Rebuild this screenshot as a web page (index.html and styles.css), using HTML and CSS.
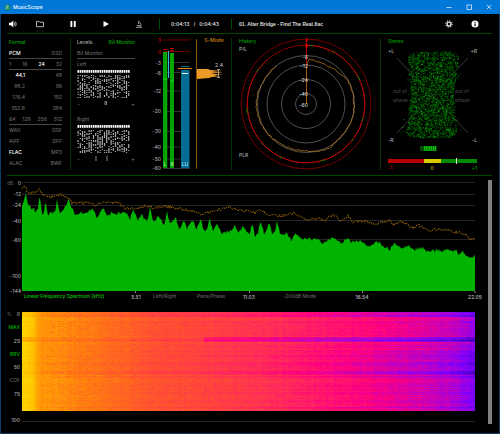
FILE: index.html
```
<!DOCTYPE html>
<html lang="en">
<head>
    <meta charset="UTF-8">
    <meta name="viewport" content="width=device-width, initial-scale=1.0">
    <title>MusicScope</title>
    <link rel="stylesheet" href="styles.css">
</head>
<body>
    <header class="titlebar">
        <svg class="app-icon" viewBox="0 0 8 8"><circle cx="4" cy="4" r="3.500" fill="#17856f"/><path d="M2 6L4 2L4.500 6M3 2.500H5.500" fill="none" stroke="#8fe0b0" stroke-width="0.800"/></svg>
        <h1>MusicScope</h1>
        <div class="window-controls">
            <button aria-label="Minimize"><svg viewBox="0 0 6 6"><path d="M0.500 3.500H5.500"/></svg></button>
            <button aria-label="Maximize"><svg viewBox="0 0 6 6"><rect x="1" y="1" width="4.500" height="4.500"/></svg></button>
            <button aria-label="Close"><svg viewBox="0 0 6 6"><path d="M0.800 0.800L5.200 5.200M5.200 0.800L0.800 5.200"/></svg></button>
        </div>
    </header>

    <main>
        <nav class="toolbar">
            <div class="transport">
                <button class="volume" aria-label="Volume"><svg viewBox="0 0 8 8"><path d="M0 2.700H1.800L4.300 0.800V7.200L1.800 5.300H0Z" fill="#fff"/><path d="M5.300 2.500Q6.200 4 5.300 5.500M6.500 1.600Q8 4 6.500 6.400" fill="none" stroke="#ddd" stroke-width="0.800"/></svg></button>
                <button aria-label="Open"><svg viewBox="0 0 8 8"><path d="M0.500 6.700V1.300H3L3.800 2.300H7.500V6.700Z" fill="none" stroke="#ccc" stroke-width="0.900"/></svg></button>
                <button aria-label="Pause"><svg viewBox="0 0 8 8"><path d="M1.400 1H3.300V7H1.400ZM4.800 1H6.700V7H4.800Z" fill="#fff"/></svg></button>
                <button aria-label="Play"><svg viewBox="0 0 8 8"><path d="M1.500 1L7 4L1.500 7Z" fill="#fff"/></svg></button>
                <button aria-label="Analyze"><svg viewBox="0 0 8 8"><path d="M1 7.300H7M2 5.600H5M4 0.600L3.300 4M4.600 2.200Q7.300 4.500 5 7" fill="none" stroke="#aaa" stroke-width="0.900"/></svg></button>
            </div>
            <div class="time"><span>0:04:13</span><span>/</span><span>0:04:43</span></div>
            <div class="track">01. Alter Bridge - Find The Real.flac</div>
            <div class="extras">
                <button aria-label="Settings"><svg viewBox="0 0 8 8"><circle cx="4" cy="4" r="3.200" fill="none" stroke="#bbb" stroke-width="1.200" stroke-dasharray="1.300 1.200"/><circle cx="4" cy="4" r="1.900" fill="none" stroke="#ddd" stroke-width="1.400"/></svg></button>
                <button aria-label="About"><svg viewBox="0 0 8 8"><circle cx="4" cy="4" r="3.500" fill="#fff"/><path d="M4 3.500V6.300M4 1.700V2.700" stroke="#000" stroke-width="1.200"/></svg></button>
            </div>
        </nav>

        <section class="meters">
            <div class="panel format">
                <h2>Format</h2>
                <div class="row line"><span class="on">PCM</span><span>DSD</span></div>
                <div class="row line"><span>1</span><span>16</span><span class="on">24</span><span>32</span></div>
                <div class="row rate"><span class="on">44.1</span><span>48</span></div>
                <div class="row rate"><span>88.2</span><span>96</span></div>
                <div class="row rate"><span>176.4</span><span>192</span></div>
                <div class="row rate"><span>352.8</span><span>384</span></div>
                <div class="row line"><span>64</span><span>128</span><span>256</span><span>512</span></div>
                <div class="row"><span>WAV</span><span>DSF</span></div>
                <div class="row"><span>AIFF</span><span>DFF</span></div>
                <div class="row"><span class="on">FLAC</span><span>MP3</span></div>
                <div class="row"><span>ALAC</span><span>BWF</span></div>
            </div>

            <div class="panel bits">
                <div class="tabs"><button>Levels</button><button class="active">Bit Monitor</button></div>
                <div class="row line"><span>Bit Monitor</span></div>
                <div class="row"><span>Left</span></div>
                <svg class="bitmap" viewBox="0 0 57 28"><path id="bits-left-top" stroke="#fff"/><path id="bits-left" stroke="#aaa"/></svg>
                <svg class="scale" viewBox="0 0 57 11"><text x="0" y="8">-</text><path d="M27.500 3V7M29 3V7" stroke="#888"/><text x="57" y="8" text-anchor="end">+</text></svg>
                <div class="row right-label"><span>Right</span></div>
                <svg class="bitmap" viewBox="0 0 57 28"><path id="bits-right-top" stroke="#fff"/><path id="bits-right" stroke="#aaa"/></svg>
                <svg class="scale" viewBox="0 0 57 11"><text x="0" y="8">-</text><path d="M18.500 3V8M29.500 3V8" stroke="#888"/><text x="57" y="8" text-anchor="end">+</text></svg>
            </div>

            <div class="panel levels">
                <svg viewBox="140 38 91 132">
                    <path d="M163 40H190M163 51.500H190" stroke="#6b0000"/>
                    <path d="M163 62.500H190M163 72.500H190M163 91H190M163 111.500H190M163 131.500H190M163 147H190M163 159H190M163 168.500H190" stroke="#333"/>
                    <g text-anchor="end" fill="#aaa">
                        <text x="161" y="42" fill="#d00000">3</text>
                        <text x="161" y="54" fill="#d00000">0</text>
                        <text x="161" y="65">-3</text>
                        <text x="161" y="75">-6</text>
                        <text x="161" y="93">-12</text>
                        <text x="161" y="113">-20</text>
                        <text x="161" y="133">-30</text>
                        <text x="161" y="149">-40</text>
                        <text x="161" y="161">-50</text>
                        <text x="161" y="170">-60</text>
                    </g>
                    <rect x="163" y="52" width="4.300" height="116" fill="#04a404"/>
                    <rect x="170" y="53" width="4" height="115" fill="#04a404"/>
                    <path d="M163 49.500H167.300M170 48.500H174M170 50.500H174" stroke="#c00000"/>
                    <path d="M163 79H167.300M170 81H174" stroke="#1de01d"/>
                    <path d="M168.500 51V78" stroke="#35b8e8"/>
                    <rect x="181" y="70" width="8.500" height="98" fill="#036d96"/>
                    <path d="M181 66.500H189.500" stroke="#036d96"/>
                    <path d="M178 68.500H192" stroke="#e08c1c"/>
                    <path d="M182 73.500H188" stroke="#fff"/>
                    <text x="165" y="166" text-anchor="middle" fill="#b8e8b8">L</text>
                    <text x="172" y="166" text-anchor="middle" fill="#b8e8b8">R</text>
                    <text x="185" y="166" text-anchor="middle" fill="#b0dcf0">LU</text>
                    <path d="M196.500 39V169" stroke="#8a5400"/>
                    <path d="M197 69H208L210 70L223 71L211 71.500L220 72L222 72.500L211 73L216 74L223 74.500L215 75L218 75.500L213 76L221 76.500L212 77L209 78L197 79Z" fill="#eb9a28"/>
                    <path d="M217 69.500H220M218.500 69.500V77.500M217 77.500H220" stroke="#ccc" stroke-width="0.700"/>
                    <text x="219" y="67" text-anchor="middle" fill="#bbb">2.4</text>
                    <text x="214" y="42" text-anchor="middle" fill="#b87814" class="bold">S-Mode</text>
                </svg>
            </div>

            <div class="panel history">
                <svg viewBox="232 38 148 132">
                    <g fill="none" stroke="#505050">
                        <circle cx="306" cy="104" r="10.500"/>
                        <circle cx="306" cy="104" r="24.500"/>
                        <circle cx="306" cy="104" r="39"/>
                        <circle cx="306" cy="104" r="48.500"/>
                        <circle cx="306" cy="104" r="65" stroke="#780000"/>
                        <circle cx="306" cy="104" r="59" stroke="#8a0000"/>
                        <path id="peak-ring" stroke="#d80c0c" stroke-width="0.700"/>
                        <path id="peak-marks" stroke="#009000" stroke-width="0.900" stroke-dasharray="3 21 2 34 5 40"/>
                        <path id="loudness-ring" stroke="#b4781e" stroke-width="0.800"/>
                    </g>
                    <path d="M306.500 39V66" stroke="#c00000"/>
                    <path d="M306.500 66V104" stroke="#a05c00"/>
                    <g text-anchor="end" fill="#ccc">
                        <text x="308" y="42" fill="#d00000">3</text>
                        <text x="308" y="48" fill="#f00000">0</text>
                        <text x="308" y="59">-6</text>
                        <text x="308" y="68">-12</text>
                        <text x="308" y="82">-24</text>
                        <text x="308" y="96">-40</text>
                        <text x="308" y="107">-60</text>
                    </g>
                    <text x="239" y="43" fill="#00a400">History</text>
                    <text x="239" y="51" fill="#aaa">P/L</text>
                    <text x="239" y="157" fill="#aaa">PLR</text>
                </svg>
            </div>

            <div class="panel stereo">
                <svg viewBox="381 38 111 132">
                    <path d="M397 58L468 133M468 58L397 133" stroke="#383838"/>
                    <g>
                        <path id="dots-dark" stroke="#004400"/>
                        <path id="dots-mid" stroke="#006c00"/>
                        <path id="dots-light" stroke="#0aa00a"/>
                    </g>
                    <text x="388" y="43" fill="#009000" class="bold">Stereo</text>
                    <g fill="#aaa">
                        <text x="388" y="53">+L</text>
                        <text x="477" y="53" text-anchor="end">+R</text>
                        <text x="388" y="142">-R</text>
                        <text x="477" y="142" text-anchor="end">-L</text>
                    </g>
                    <g fill="#404040">
                        <text x="393" y="93">out of</text>
                        <text x="393" y="102">phase</text>
                        <text x="455" y="93">out of</text>
                        <text x="455" y="102">phase</text>
                    </g>
                    <path d="M420 148.500H437" stroke="#064c06" stroke-width="5"/>
                    <path d="M424 148.500H436" stroke="#0bbd0b" stroke-width="5" stroke-dasharray="1.500 0.700"/>
                    <rect x="388" y="159" width="36" height="4" fill="#b80000"/>
                    <rect x="424" y="159" width="17" height="4" fill="#d8cc00"/>
                    <rect x="441" y="159" width="36" height="4" fill="#008c00"/>
                    <path d="M456.500 158V164" stroke="#ddd"/>
                    <text x="388" y="170" fill="#d00000">-1</text>
                    <text x="432" y="170" text-anchor="middle" fill="#c8bc00">0</text>
                    <text x="477" y="170" text-anchor="end" fill="#00a000">+1</text>
                </svg>
            </div>
        </section>

        <section class="analysis">
            <div class="plots">
                <svg class="spectrum" viewBox="7 176 481 126">
                    <path d="M22 182.500H475M22 194.500H475M22 205.500H475M22 220.500H475M22 239.500H475" stroke="#242424"/>
                    <path id="spectrum-fill" fill="#00b400"/>
                    <path id="spectrum-max" fill="none" stroke="#946208" stroke-dasharray="2 1"/>
                    <path d="M135.500 291V293M249.500 291V293M362.500 291V293M475 291V293" stroke="#888"/>
                    <text x="7" y="185" fill="#555">dB</text>
                    <g text-anchor="end" fill="#aaa">
                        <text x="21" y="185">0</text>
                        <text x="21" y="196">-12</text>
                        <text x="21" y="207">-24</text>
                        <text x="21" y="223">-40</text>
                        <text x="21" y="242">-60</text>
                        <text x="21" y="278">-100</text>
                        <text x="21" y="293">-144</text>
                    </g>
                    <text x="24" y="298" fill="#00c400">Linear Frequency Spectrum [kHz]</text>
                    <g fill="#606060">
                        <text x="153" y="298">Left/Right</text>
                        <text x="197" y="298">Pans/Phase</text>
                        <text x="283" y="298">-200dB Mode</text>
                    </g>
                    <g text-anchor="middle" fill="#bbb">
                        <text x="136" y="299">5.51</text>
                        <text x="249" y="299">11.03</text>
                        <text x="362" y="299">16.54</text>
                        <text x="475" y="299">22.05</text>
                    </g>
                </svg>
                <div class="spectrogram">
                    <div class="y-axis">
                        <div class="zero"><span class="unit">%</span><span>0</span></div>
                        <button class="active">MAX</button>
                        <span>25</span>
                        <button class="active">BRV</button>
                        <span>50</span>
                        <button>COF</button>
                        <span>75</span>
                        <span></span>
                        <span>100</span>
                    </div>
                    <div class="heat">
                        <canvas id="heatmap" width="453" height="99"></canvas>
                    </div>
                </div>
            </div>
            <div class="scrollbar"></div>
        </section>
    </main>
    <script src="scope.js"></script>
</body>
</html>
```
FILE: styles.css
```
* {
    box-sizing: border-box;
}
body {
    margin: 0;
    min-height: 100vh;
    display: flex;
    flex-direction: column;
    background: #000;
    color: #666;
    font-family: Inter, "Liberation Sans", sans-serif;
    font-size: 5px;
    font-weight: 500;
    line-height: 8px;
}
svg {
    display: block;
    width: 100%;
    overflow: visible;
}
svg text {
    font-size: 5px;
}
button {
    margin: 0;
    padding: 0;
    border: 0;
    background: none;
    color: inherit;
    font: inherit;
    cursor: pointer;
}
h1, h2 {
    margin: 0;
    font-size: 5px;
    font-weight: 500;
}
.bold {
    font-weight: 600;
}

/* title bar */
.titlebar {
    display: flex;
    align-items: center;
    height: 14px;
    padding: 0 8px 0 4px;
    background: #0078d7;
}
.titlebar h1 {
    margin-left: 2px;
    color: #f0f8ff;
}
.app-icon {
    width: 7px;
    height: 7px;
}
.window-controls {
    display: flex;
    gap: 14px;
    margin-left: auto;
}
.window-controls svg {
    width: 6px;
    height: 6px;
    fill: none;
    stroke: #d8ecff;
    stroke-width: 0.8;
}

main {
    flex: 1;
    padding: 0 7px 4px 6px;
    border: solid #0c3c66;
    border-width: 0 1px 1px;
}

/* toolbar */
.toolbar {
    display: flex;
    align-items: center;
    height: 20px;
    border-bottom: 1px solid #004a00;
}
.toolbar svg {
    width: 8px;
    height: 8px;
}
.transport {
    display: flex;
    gap: 25px;
    width: 152px;
    padding-left: 2px;
}
.transport .volume {
    margin-right: -6px;
}
.time, .track {
    height: 12px;
    border-left: 1px solid #004a00;
    color: #ddd;
    font-weight: 600;
    line-height: 13px;
}
.time {
    display: flex;
    justify-content: space-between;
    width: 72px;
    padding: 0 12px 0 11px;
}
.track {
    padding-left: 7px;
    font-family: "Liberation Sans", sans-serif;
    font-weight: 700;
}
.extras {
    display: flex;
    gap: 18px;
    margin-left: auto;
    padding-right: 13px;
}

/* meters */
.meters {
    display: grid;
    grid-template-columns: minmax(0, 63fr) minmax(0, 70fr) minmax(0, 91fr) minmax(0, 149fr) minmax(0, 112fr);
    padding: 4px 0 5px;
    border-bottom: 1px solid #004a00;
}
.bits, .history, .stereo {
    border-left: 1px solid #003600;
}
.row {
    display: flex;
    justify-content: space-between;
    height: 11px;
    line-height: 11px;
}
.line {
    border-bottom: 1px solid #484848;
}
.on {
    color: #fff;
}
.format {
    padding: 0 8px 0 2px;
}
.format h2 {
    height: 10px;
    color: #00a400;
}
.rate span:first-child {
    width: 16px;
    text-align: right;
}
.bits {
    padding: 0 5px 0 6px;
}
.tabs {
    display: flex;
    justify-content: space-between;
    height: 10px;
    color: #aaa;
    line-height: 8px;
}
.tabs button {
    height: 8px;
}
.tabs .active {
    color: #009400;
    font-weight: 600;
}
.bitmap {
    height: 28px;
}
.scale {
    height: 11px;
    fill: #888;
}
.right-label {
    height: 16px;
    line-height: 21px;
}

/* spectrum and spectrogram */
.analysis {
    display: flex;
}
.plots {
    flex: 1;
    min-width: 0;
}
.spectrogram {
    display: grid;
    grid-template-columns: 13px 1fr;
    gap: 2px;
    padding: 8px 13px 0 0;
}
.y-axis {
    display: flex;
    flex-direction: column;
    justify-content: space-between;
    align-items: flex-end;
    height: 114px;
    color: #aaa;
}
.y-axis > * {
    height: 8px;
}
.y-axis button {
    color: #606060;
}
.y-axis .active {
    color: #00b400;
}
.zero {
    display: flex;
    justify-content: space-between;
    width: 100%;
}
.unit {
    color: #606060;
}
.heat {
    height: 112px;
    padding-top: 2px;
    border-bottom: 1px solid #242424;
}
.heat canvas {
    display: block;
    width: 100%;
    height: 99px;
}
.scrollbar {
    width: 4px;
    margin-top: 4px;
    background: #808080;
}
```
FILE: scope.js
```
var seed = 7;
function rnd() {
    seed = (seed * 16807) % 2147483647;
    return seed / 2147483647;
}

function setPath(id, d) {
    document.getElementById(id).setAttribute('d', d);
}

// linear interpolation through [x, y] points
function lerpPoints(points, x) {
    for (var i = 1; i < points.length; i++) {
        if (x <= points[i][0]) {
            var a = points[i - 1], b = points[i];
            return a[1] + (b[1] - a[1]) * (x - a[0]) / (b[0] - a[0]);
        }
    }
    return points[points.length - 1][1];
}

// bit monitor
function drawBits(id) {
    var top = '', d = '';
    for (var c = 0; c < 24; c++) {
        var x = (c * 2.2).toFixed(1);
        top += 'M' + x + ' 0.500h1.600M' + x + ' 1.500h1.600M' + x + ' 2.300h1.600';
        for (var y = 5; y < 28; y += 1) {
            if (rnd() < 0.56) d += 'M' + x + ' ' + (y + 0.5) + 'h1.200';
        }
    }
    setPath(id + '-top', top);
    setPath(id, d);
}
drawBits('bits-left');
drawBits('bits-right');

// history rings
function drawRing(id, points, jitter, from, to) {
    var d = '';
    for (var a = from; a <= to; a += 2) {
        var r = lerpPoints(points, a) + (rnd() - 0.5) * jitter;
        var t = a * Math.PI / 180;
        d += (d ? 'L' : 'M') + (306 + r * Math.sin(t)).toFixed(1) + ' ' + (104 - r * Math.cos(t)).toFixed(1);
    }
    setPath(id, d);
}
drawRing('peak-ring', [[0, 58.6], [360, 58.6]], 0.8, 0, 320);
drawRing('peak-marks', [[0, 59], [360, 59]], 1, 4, 320);
drawRing('loudness-ring', [[0, 38], [4, 45], [20, 44], [35, 44], [50, 46], [60, 48], [140, 48], [155, 50],
    [180, 47], [215, 47], [230, 48], [270, 50], [300, 48], [320, 48]], 1.4, 0, 322);

// stereo scope
var dots = { 'dots-dark': 1500, 'dots-mid': 1000, 'dots-light': 260 };
Object.keys(dots).forEach(function (id) {
    var d = '';
    for (var i = 0; i < dots[id]; i++) {
        var v = rnd() * 2 - 1;
        var half = 21 + 5 * Math.abs(v);
        if (Math.abs(v) > 0.9) half *= 1 - (Math.abs(v) - 0.9) * 3;
        var h = rnd() * 2 - 1;
        if (rnd() < 0.08) h *= 1.2;
        d += 'M' + (432 + h * half - v).toFixed(1) + ' ' + (95 + v * 43).toFixed(1) + 'h1';
    }
    setPath(id, d);
});

// frequency spectrum
var floorPts = [[22, 205], [26, 194], [28, 205], [32, 208], [36, 211], [38, 210], [39.5, 194], [42, 214], [44, 213], [45.5, 203],
    [48, 214], [52, 213], [55, 211], [57, 198], [60, 214], [65, 208], [68.5, 200], [72, 209], [76, 215], [80, 212], [87, 213],
    [91.5, 208], [97, 217], [103.5, 207], [107, 216], [113, 213], [120, 214], [125, 211], [130, 219], [133.5, 210],
    [138, 220], [141.5, 215], [147, 222], [150, 208], [153, 222], [158, 217], [163, 224], [165, 222], [167, 212],
    [170, 224], [176, 218], [179, 231], [184, 219], [187, 229], [192.5, 219], [196, 229], [201, 219], [204, 231],
    [207, 228], [209.5, 218], [213, 230], [217, 224], [222, 234], [230, 231], [235, 226], [239, 233], [243, 226],
    [247, 233], [250, 232], [252.5, 223], [255, 236], [258, 232], [260.5, 222], [264, 233], [266, 231], [269, 223],
    [272, 234], [275, 231], [277, 222], [281, 236], [287, 233], [291, 240], [295, 234], [302, 239], [316, 239],
    [322, 243], [328, 239], [336, 239], [341, 245], [347, 238], [352, 242], [364, 242], [370, 247], [378, 242],
    [390, 249], [395, 243], [402, 248], [409, 246], [414, 250], [421, 247], [430, 252], [438, 250], [446, 251],
    [455, 250], [459, 254], [463, 252], [467, 256], [474, 258], [475, 254]];
var maxPts = [[22, 190], [24.5, 186], [28, 193], [33, 193], [39, 190], [43, 195], [50, 197], [57, 195], [63, 195],
    [68, 198], [72, 203], [90, 203], [95, 206], [103, 202], [118, 203], [125, 208], [135, 209], [145, 206],
    [155, 208], [165, 206], [180, 209], [190, 210], [201, 214], [215, 211], [228, 207], [240, 210], [255, 213],
    [261, 210], [268, 215], [280, 216], [295, 213], [305, 219], [320, 219], [326, 221], [330, 215], [336, 215],
    [341, 222], [348, 215], [352, 222], [365, 221], [375, 225], [382, 222], [390, 220], [393, 225], [402, 221],
    [412, 228], [418, 225], [428, 230], [445, 229], [455, 232], [465, 234], [470, 239], [475, 240]];
var fill = 'M22 291', line = '';
for (var x = 22; x <= 475; x++) {
    fill += 'L' + x + ' ' + (lerpPoints(floorPts, x) + (rnd() - 0.5) * 4).toFixed(1);
    line += (line ? 'L' : 'M') + x + ' ' + (lerpPoints(maxPts, x) + (rnd() - 0.5) * 3).toFixed(1);
}
setPath('spectrum-fill', fill + 'V291Z');
setPath('spectrum-max', line);

// spectrogram, heat 0 is loud (yellow) and 1 is quiet (violet)
var stops = [[0, 255, 212, 0], [0.05, 255, 168, 0], [0.2, 255, 118, 20], [0.4, 255, 72, 56], [0.55, 255, 40, 92],
    [0.7, 255, 0, 128], [0.8, 214, 0, 170], [0.9, 170, 0, 215], [1, 124, 0, 255], [1.15, 74, 0, 190]];
function heatColor(t) {
    t = Math.max(0, Math.min(1.15, t));
    return [1, 2, 3].map(function (c) {
        return lerpPoints(stops.map(function (s) { return [s[0], s[c]]; }), t);
    });
}
var palette = [];
for (var p = 0; p <= 230; p++) palette.push(heatColor(p / 200));

var ramp = [[0, 0], [0.025, 0.02], [0.04, 0.1], [0.15, 0.19], [0.3, 0.36], [0.5, 0.48], [0.68, 0.61], [0.8, 0.7], [0.9, 0.77], [0.96, 0.84], [1, 0.95]];
var canvas = document.getElementById('heatmap');
var ctx = canvas.getContext('2d');
var img = ctx.createImageData(canvas.width, canvas.height);
var cols = [];
for (var cx = 0; cx < canvas.width; cx++) cols.push((rnd() - 0.5) * 0.04);
for (var y = 0; y < canvas.height; y++) {
    var row = (rnd() - 0.5) * 0.09;
    if (rnd() < 0.15) row += 0.06;
    if (y < 5) row += 0.13;
    if (y >= 50 && y < 63) row += 0.07;
    var cell = 0;
    for (var cx = 0; cx < canvas.width; cx++) {
        var u = cx / canvas.width;
        if (cx % 3 === 0) cell = (rnd() - 0.5) * 0.07;
        var weight = u < 0.04 ? 0.1 : Math.min(1, 0.3 + u);
        var t = lerpPoints(ramp, u) + row * weight + (cell + cols[cx]) * (u < 0.04 ? 0.2 : 1);
        // quiet passage, only the upper half of the range drops
        if (y >= 25 && y < 30) t += u > 0.4 ? 0.2 : 0.04;
        // slow fade toward the end of the track
        if (y > 38 && u > 0.5) t += (u - 0.5) * 0.12;
        var rgb = palette[Math.max(0, Math.min(230, Math.round(t * 200)))];
        var o = (y * canvas.width + cx) * 4;
        img.data[o] = rgb[0];
        img.data[o + 1] = rgb[1];
        img.data[o + 2] = rgb[2];
        img.data[o + 3] = 255;
    }
}
ctx.putImageData(img, 0, 0);
```
